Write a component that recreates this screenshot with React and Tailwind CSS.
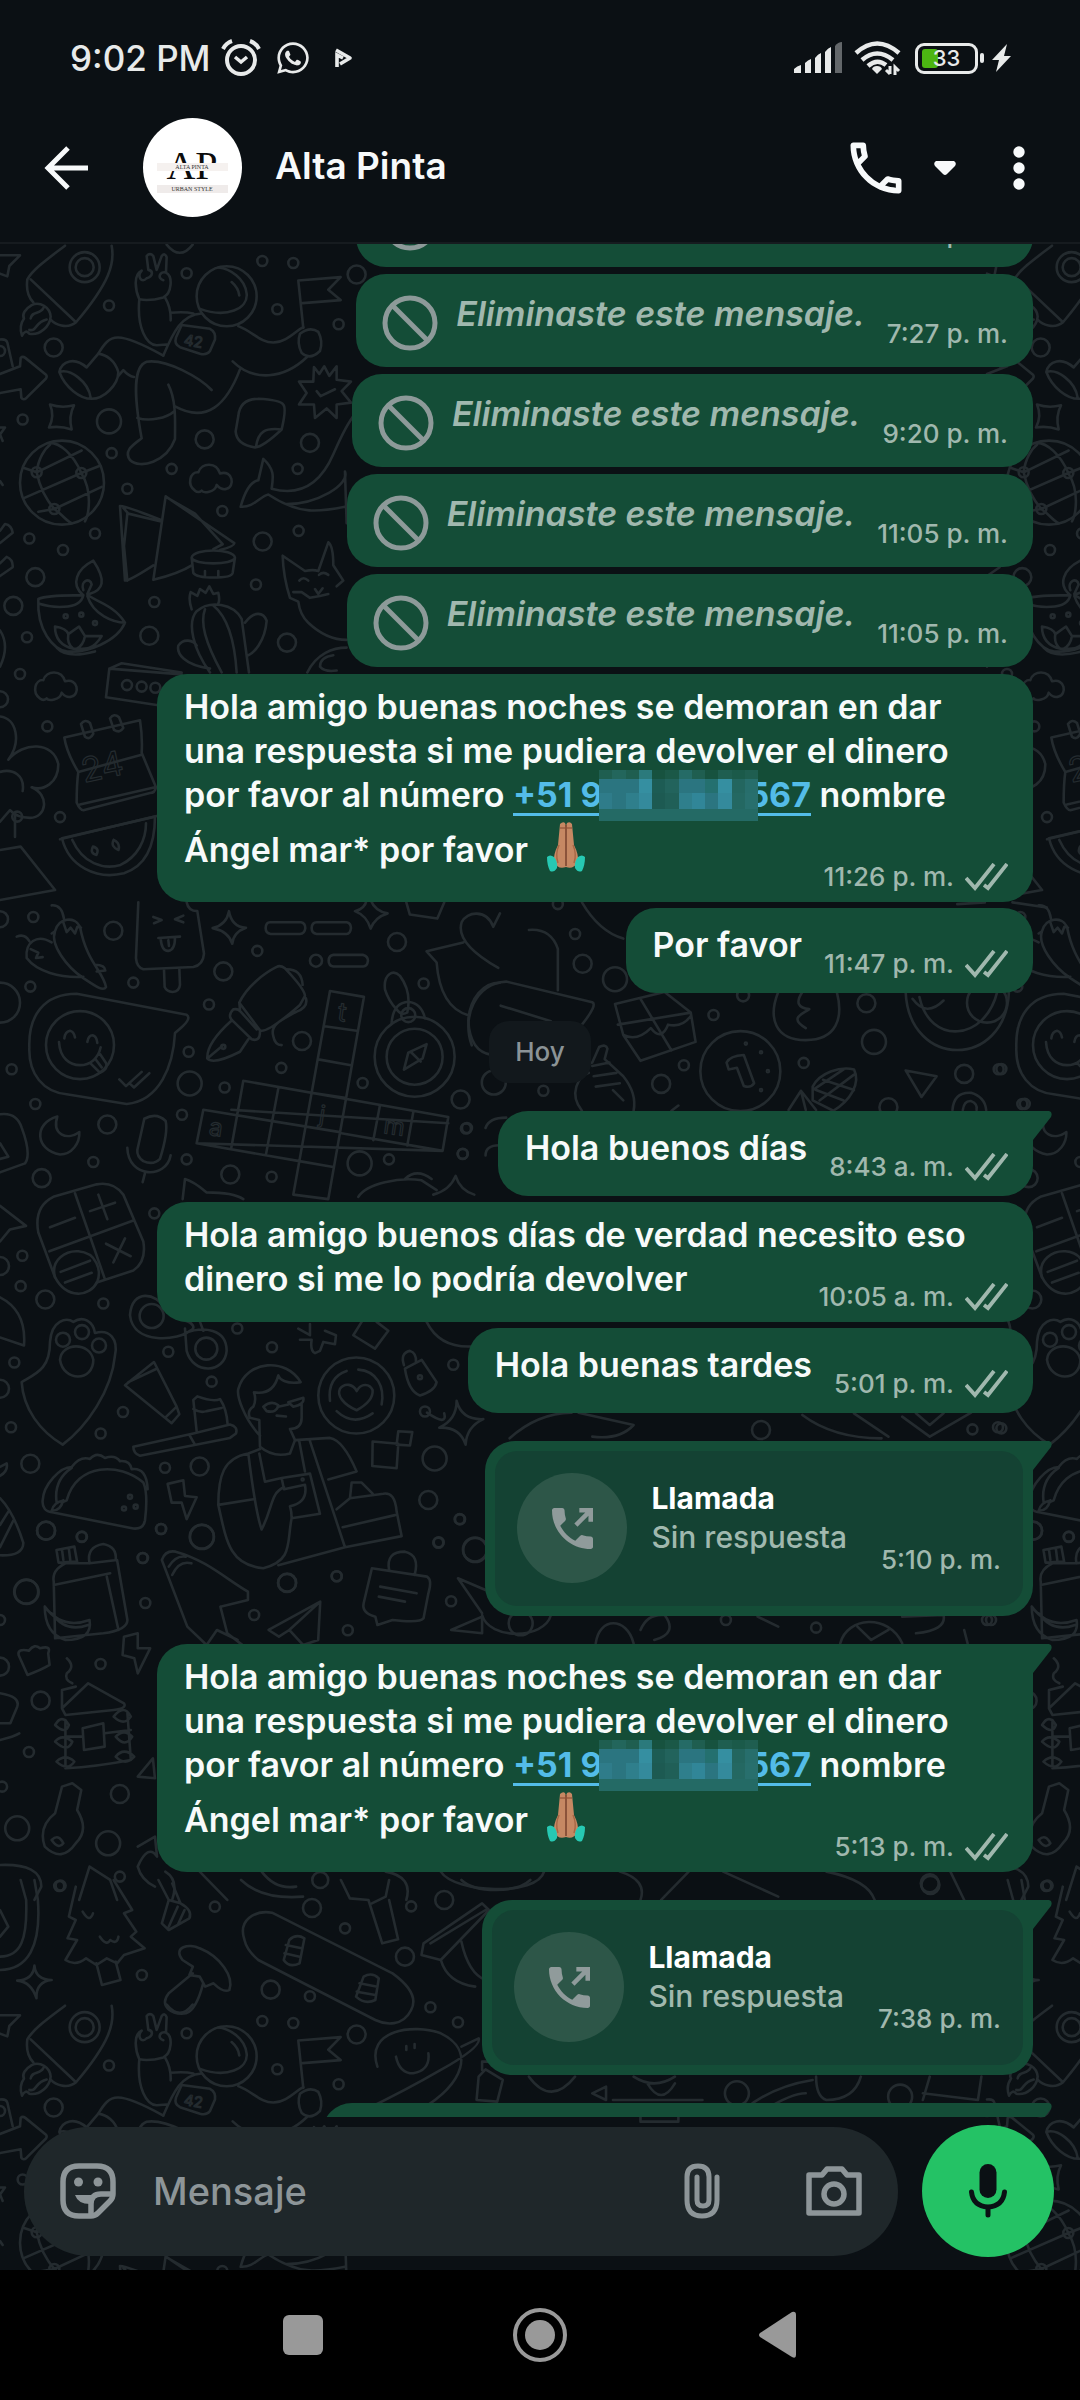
import { FaWhatsapp } from 'react-icons/fa';
import { MdOutlineCall } from 'react-icons/md';
import clsx from 'clsx';

const MESSAGES = [
  { id: 1, type: 'deleted', time: '7:27 p. m.' },
  { id: 2, type: 'deleted', time: '7:27 p. m.' },
  { id: 3, type: 'deleted', time: '9:20 p. m.' },
  { id: 4, type: 'deleted', time: '11:05 p. m.' },
  { id: 5, type: 'deleted', time: '11:05 p. m.' },
  { id: 6, type: 'request', time: '11:26 p. m.' },
  { id: 7, type: 'text', text: 'Por favor', time: '11:47 p. m.' },
  { id: 8, type: 'day', text: 'Hoy' },
  { id: 9, type: 'text', text: 'Hola buenos días', time: '8:43 a. m.', tail: true },
  {
    id: 10,
    type: 'long',
    lines: ['Hola amigo buenos días de verdad necesito eso', 'dinero si me lo podría devolver'],
    time: '10:05 a. m.',
  },
  { id: 11, type: 'text', text: 'Hola buenas tardes', time: '5:01 p. m.' },
  { id: 12, type: 'call', time: '5:10 p. m.', tail: true },
  { id: 13, type: 'request', time: '5:13 p. m.', tail: true },
  { id: 14, type: 'call', time: '7:38 p. m.', tail: true },
  { id: 15, type: 'empty', tail: true },
];

// Wallpaper line art. Each sheet has its own origin and scale; dots are [x, y, radius].
const SHEETS = [
  {
    x: 0, y: 240, sx: 0.3333, sy: 0.3827,
    paths: [
      'M195 15C150 45 100 75 82 103C78 130 85 150 100 163M335 15C345 60 330 110 228 215C200 235 165 220 152 208M92 103L228 215',
      'M95 170C75 180 65 195 72 205C60 220 60 235 66 250C72 240 80 235 88 245C120 250 150 225 152 200C150 175 120 160 95 170M92 205C95 185 120 195 130 178M88 235C110 240 105 215 140 208',
      'M0 350L60 330L62 308Q68 303 76 308L138 352Q142 357 138 362L80 412Q70 420 64 412L62 390L0 400M0 260Q18 258 22 268L38 330',
      'M0 40L60 40L28 68L22 95L0 88M0 490L15 490L0 508L8 525M0 630L8 640',
      'M260 333C225 305 185 315 178 345C195 385 240 415 275 415C310 415 355 380 355 345C345 315 320 300 295 297L260 333M178 345C210 335 265 370 272 412',
      'M295 297C330 245 350 235 490 302M355 355L370 340Q385 355 402 358M425 518C400 400 400 330 440 318C500 310 600 360 635 392M505 378C530 420 525 480 525 520C500 580 420 600 390 575C370 550 400 535 425 518M412 465C450 475 500 465 522 448',
      'M525 435C620 480 680 430 720 338M698 317C760 370 850 365 922 305M490 302C520 240 545 195 605 192M418 155C410 230 440 275 470 275L500 273M495 150C515 180 512 200 512 210M512 190C540 188 570 190 580 192M715 225C760 240 780 268 820 268C860 268 890 235 910 228',
      'M418 155C405 130 400 90 425 80C410 95 425 115 440 100C460 95 460 80 445 78L440 42Q450 32 460 42L470 78L485 42Q495 32 500 45L498 85C480 80 470 100 490 105M498 85C520 95 515 140 490 150Q450 160 418 155',
      'M545 222L630 232Q648 240 645 260L630 290Q620 302 600 297L540 280Q522 272 528 255Z',
      'M600 180C680 205 745 180 740 140C735 100 690 75 655 72M695 110Q715 125 718 145M910 230L895 106L1022 97L985 130L1022 157L908 165',
      'M900 245Q930 225 955 240Q970 265 960 290Q930 315 905 295Q890 270 900 245',
      'M942 332L958 350L973 330L988 355L1010 330L1010 365L1053 370L1025 395L1053 425L1010 430L1010 465L980 440L945 465L942 430L897 430L920 400L897 370L940 370ZM950 395L962 408L1005 390',
      'M150 430Q185 440 222 432Q205 460 215 495Q180 485 147 490Q165 460 150 430Z',
      'M110 607C115 570 135 545 150 535M110 607C120 650 140 680 163 703M244 609C220 560 180 530 150 530M244 609C280 660 265 720 255 735M163 703L305 645M110 607L245 550M70 675L244 609L300 590M163 703C190 720 200 735 215 740M163 703L115 710M70 595L110 607',
      'M775 415Q720 415 715 460L707 500Q710 535 765 542Q790 540 845 495Q860 440 850 430Q840 418 775 415M768 540C775 500 795 490 845 495',
      'M585 655C560 640 570 605 595 607C605 580 650 580 660 610C700 600 705 645 680 650C665 655 655 645 650 640C645 660 610 662 605 655Q595 662 585 655Z',
      'M120 1198C95 1183 105 1148 130 1150C140 1123 185 1123 195 1153C235 1143 240 1188 215 1193C200 1198 190 1188 185 1183C180 1203 145 1205 140 1198Q130 1205 120 1198Z',
      'M722 697C740 640 760 630 775 628L790 572C825 600 820 620 815 650C900 670 960 640 1000 560C1020 520 1040 480 1065 455M722 697C760 700 780 670 805 665C900 720 960 710 1035 697M1035 605C1050 640 950 690 860 690M1035 605L1040 740',
      'M360 695Q370 693 485 732M360 695L375 890Q380 895 460 850M382 715L372 800L382 890M370 700L385 715L480 735M497 670L703 792Q705 800 660 810M497 670L460 888Q540 870 575 850M505 675L585 715L668 795L640 808',
      'M575 830C580 805 700 805 705 830C700 850 580 850 575 830L580 870Q590 882 640 882Q695 882 698 870L705 830M615 865L615 880M655 865L655 880',
      'M115 938C110 1020 160 1070 200 1075C260 1080 350 1050 375 1000C340 950 270 940 262 925M115 938C150 925 230 930 250 928C240 970 150 960 115 950M262 930C280 980 340 1000 375 1000M250 928C210 900 230 860 280 838C320 890 310 915 268 925M250 915C240 890 270 880 275 900L262 925M165 1010Q200 1015 205 1030L237 1010L255 1035L305 1035C280 1070 260 1070 220 1068C180 1060 165 1040 165 1010M205 1030Q200 1055 220 1068M255 1035Q250 1060 230 1068M170 1065Q200 1095 285 1075',
      'M848 825L915 865Q940 860 955 865L985 790Q1000 800 1000 850L1030 890L1010 905M848 825Q850 880 870 935L895 945Q900 980 925 1000Q980 1045 1040 1045M898 890Q910 878 925 890M957 875Q970 865 985 875M945 912L955 925L968 910M880 920L905 920L930 935L960 930L985 925',
      'M575 965C565 940 570 925 572 920L592 930L600 912L617 922L628 905L640 925L655 922Q660 940 655 950M630 1130C580 1070 560 1000 590 970C630 940 700 950 725 990L747 1130M665 1130C615 1050 600 1000 615 965M710 1130C705 1060 690 990 640 955M735 1000C760 970 790 970 800 995C795 1050 760 1080 745 1085M630 1120C550 1110 530 1080 535 1060C550 1040 580 1045 590 1060',
      'M922 1130C950 1080 1000 1065 1040 1065M1000 1085Q960 1090 960 1115Q975 1130 1010 1125M318 1195L328 1120L365 1106L545 1130M328 1120L545 1135M318 1195L470 1215',
      'M193 1300L420 1255Q428 1300 425 1340L468 1430Q465 1445 450 1445L250 1490Q240 1490 230 1470Q230 1420 235 1390Q200 1340 193 1300M235 1390L425 1345M240 1475L465 1430',
      'M243 1265Q255 1250 270 1262L280 1290Q270 1308 255 1298ZM330 1250Q342 1235 357 1247L370 1275Q360 1290 342 1280Z',
      'M0 1245C50 1250 65 1310 25 1358C70 1310 160 1310 175 1370C175 1420 130 1440 95 1430C150 1450 140 1510 90 1510Q50 1510 30 1490L0 1520M0 1390C40 1380 75 1400 68 1440M45 1500L45 1560',
      'M0 760L15 742Q35 745 38 765L0 792M0 845L20 828Q40 835 38 855L0 878M0 1020Q30 1060 0 1115M500 12Q540 55 578 12M180 1566L470 1505',
    ],
    dots: [
      [254, 71, 15], [254, 71, 9], [680, 147, 30], [186, 634, 42], [110, 607, 5], [244, 609, 5], [163, 703, 5],
      [560, 87, 5], [787, 55, 5], [880, 60, 5], [832, 181, 5], [1016, 220, 5], [327, 171, 5], [161, 281, 9],
      [68, 469, 5], [327, 474, 12], [335, 557, 5], [614, 521, 9], [515, 598, 5], [930, 530, 9], [893, 598, 5],
      [382, 650, 5], [667, 708, 5], [285, 767, 5], [88, 780, 5], [189, 810, 5], [788, 788, 9], [896, 760, 5],
      [106, 881, 9], [768, 900, 5], [463, 946, 5], [40, 956, 9], [448, 1034, 9], [81, 1038, 5], [861, 1052, 9],
      [60, 1134, 5], [381, 1163, 5], [425, 1167, 5], [466, 1170, 5], [142, 1271, 5], [180, 1508, 5], [0, 1200, 8],
      [1070, 90, 9], [197, 983, 2], [244, 979, 2], [285, 1001, 2], [0, 290, 5],
    ],
    labels: [[550, 274, 15, 10, '42'], [252, 1418, 34, -12, '24']],
  },
  {
    x: 0, y: 380, sx: 0.6887, sy: 0.3333,
    paths: [
      'M90 1375L225 1310M90 1375C100 1460 140 1500 180 1480C210 1460 225 1400 225 1310M105 1380C120 1450 150 1470 175 1455C200 1430 212 1380 212 1330M135 1400Q130 1420 140 1425Q145 1405 135 1400M165 1380Q160 1400 172 1410Q175 1390 165 1380M0 1410L30 1400L80 1530L0 1560',
    ],
    dots: [[25, 1310, 5]],
  },
  {
    x: 0, y: 900, sx: 0.3333, sy: 0.4464,
    paths: [
      'M165 70C150 100 200 150 250 175C290 195 310 205 318 195C310 160 260 140 240 60C225 35 175 40 165 70L155 75M190 50L200 72L212 62L225 75L232 60L243 62M155 12Q185 10 192 42M50 82Q75 75 88 92M155 95C110 75 75 95 80 130C110 160 180 175 250 172M92 110L115 118L108 130L128 128M285 145Q315 145 316 158L290 160',
      'M415 5L408 130Q410 150 430 155L580 150Q610 145 612 120L592 25Q565 25 560 5M492 155L494 195Q500 205 518 206Q538 205 540 190L538 152M460 38L485 45L462 52M550 35L525 43L550 50M475 85L540 82M482 86Q485 115 505 114Q525 112 525 84M505 90L507 103',
      'M687 25Q695 60 738 62Q700 72 697 98Q685 70 638 63Q680 55 687 25ZM1112 0Q1125 25 1163 30Q1125 38 1112 64Q1100 35 1065 25Q1095 20 1100 0',
      'M810 50H903Q916 52 916 63Q914 76 900 76H812Q797 75 797 63Q798 50 810 50ZM950 50H1040Q1053 52 1053 63Q1051 76 1040 76H950Q935 75 935 63Q936 50 950 50ZM1000 123H1090Q1104 126 1104 136Q1102 149 1090 149H1000Q986 147 986 136Q987 124 1000 123Z',
      'M88 330C85 260 130 210 230 210L560 257Q575 265 545 285L525 298C520 370 480 450 380 457L200 435C130 430 85 390 88 330M193 310Q195 295 210 293Q222 295 225 308M262 318Q265 303 278 303Q290 305 292 320M177 318C180 355 210 370 240 370C270 370 295 355 302 330M270 365L300 387Q325 380 318 365L300 345M285 355L305 375M358 402L378 417L425 385M392 413L402 420L448 388',
      'M830 150C790 165 740 195 718 230L780 292Q800 300 900 235L915 215Q915 200 855 153Q840 145 830 150M860 155Q905 155 908 190M918 220Q925 240 890 250C840 270 810 280 820 305Q825 325 845 325M718 230L720 245M700 245Q680 260 700 272L755 312Q780 318 780 295M700 245Q715 243 722 250L770 290M695 270C650 300 620 330 622 355Q640 370 720 340L745 312M622 355L665 328',
      'M990 204L1092 217L985 670L880 660ZM974 283L1070 293M955 357L1053 370M935 432L1035 443M730 405L1345 486L1328 562L590 545L610 470L1020 520M730 405L694 555M835 422L798 570M1140 460L1120 538M1240 475L1222 550M898 585L1000 598M590 545L898 585M1328 562L1020 522M694 470L1345 500',
      'M1155 200C1150 165 1180 155 1200 170C1225 195 1230 225 1222 252Q1205 260 1190 245Q1165 225 1155 200M1175 275Q1180 230 1225 228Q1265 232 1275 265M1212 380L1225 342L1280 323L1268 355ZM1232 340L1262 362M1280 115L1390 95M1280 115L1310 140Q1320 240 1405 258M1495 152C1420 120 1370 85 1385 50C1400 25 1460 20 1480 60L1500 30M1405 270C1410 220 1450 185 1500 185M1405 270Q1410 340 1475 347',
      'M172 485C100 500 105 560 180 570C215 570 240 545 238 520C200 540 155 525 172 485M433 490Q470 475 497 495Q505 520 480 580Q460 595 430 585Q410 575 412 560ZM382 555C385 625 500 625 512 572M435 612L428 632',
      'M115 745C105 705 120 680 160 665L290 637Q340 630 370 660L430 765Q440 810 400 830L290 857M115 745L165 845M225 657L315 850M148 787L400 718M150 733L225 712M270 697L345 678M295 660L322 715M318 770L392 798M375 758L340 812M182 833L270 808M195 857L275 835',
      'M165 845C150 805 200 785 235 787C290 790 305 830 292 855C270 890 200 895 165 845M0 480Q50 475 65 510Q95 570 75 590L0 610M0 545L25 575L0 580M0 685L78 730L30 738L0 765M0 890Q80 920 72 998L0 980',
      'M65 1080C110 1060 150 1050 150 990C155 940 200 935 220 945C250 930 280 945 285 970C330 960 355 985 345 1020C335 1100 260 1180 188 1220C120 1190 70 1140 65 1080',
      'M180 1030C185 990 270 990 280 1030C280 1080 190 1080 180 1030M375 1087L462 1035L530 1135L495 1160ZM385 1080L470 1050M495 1160L515 1172L538 1152L530 1135M400 1225L580 1195L690 1175Q715 1180 708 1195L690 1205L420 1245Q400 1240 400 1225M568 1198L585 1220M590 1190L580 1120L592 1112Q640 1125 660 1118Q680 1140 683 1175M580 1140Q600 1150 620 1145L665 1138',
      'M390 930C395 870 470 880 495 915L545 940C580 945 590 960 570 965C540 985 400 1000 390 930M555 960L560 1010C580 1065 675 1060 680 1010C680 960 610 955 555 970M600 945L610 965M895 960L930 975L930 950M900 985L935 985Q930 1010 945 1015L960 1010L970 990L1005 995L1008 975L975 965M1060 975L1085 945M1060 975L1125 1005L1165 965L1130 945M1280 945Q1320 1005 1420 1000',
      'M780 1200C730 1160 710 1110 715 1095C740 1030 860 1025 902 1080C860 1085 840 1075 835 1065Q820 1110 762 1103Q770 1120 760 1135Q740 1145 750 1160L778 1165L780 1225Q820 1250 870 1240L885 1210L870 1185Q905 1185 905 1160L905 1130M790 1135Q815 1120 835 1132Q830 1150 800 1145ZM865 1125L910 1115Q915 1130 880 1135ZM835 1135L865 1130M830 1155L858 1157',
      'M655 1355C655 1290 670 1250 745 1240L780 1230M655 1355C680 1440 690 1490 790 1497C880 1480 860 1440 875 1385L960 1375L930 1285L845 1295L852 1320L915 1310Q925 1350 870 1358Q875 1370 875 1385M745 1240C755 1300 770 1380 785 1410C820 1360 810 1330 852 1315M655 1355L765 1342M795 1303L845 1295M795 1303L778 1240M885 1210L990 1205Q1030 1210 1070 1280L985 1298M930 1212L1035 1450L835 1490M898 1213L915 1280M1010 1365L1050 1340L1150 1330Q1185 1325 1190 1370L1205 1425L1035 1450M1028 1405L1185 1378M1050 1340L1055 1305L1085 1305L1118 1330',
      'M1070 1143C1030 1130 1010 1110 1020 1095C1035 1080 1060 1085 1070 1100C1085 1080 1110 1085 1118 1098C1120 1120 1090 1135 1070 1143M990 1122C985 1090 1000 1065 1040 1055M1075 1052C1130 1055 1155 1090 1145 1130M1010 1145Q1060 1180 1118 1150M1215 1050L1265 1030L1310 1080Q1305 1100 1260 1110Q1225 1100 1215 1050M1212 1042Q1200 1015 1230 1010Q1250 1015 1248 1035',
      'M1118 1213L1195 1218L1190 1273L1117 1268ZM1195 1190L1237 1192L1230 1222L1190 1220ZM1370 1122Q1385 1165 1450 1163Q1400 1180 1397 1220Q1380 1180 1318 1182Q1370 1165 1370 1122ZM503 1308L550 1300L555 1335L590 1338L560 1387L545 1350L515 1350Z',
      'M128 1345C130 1310 180 1270 215 1270Q240 1245 270 1252Q290 1235 315 1250Q345 1242 360 1257Q390 1255 395 1275Q440 1270 443 1320M128 1345Q125 1370 160 1372L400 1408Q430 1410 435 1390Q445 1330 430 1305C360 1260 230 1260 200 1345L185 1350M190 1345Q180 1370 155 1368Q160 1350 190 1345M215 1272Q160 1300 170 1350',
      'M0 1340Q40 1370 70 1440Q70 1470 0 1468M0 1400L25 1370M0 1450L40 1390M0 1270L20 1262Q25 1280 0 1290M548 670L555 625Q580 630 620 655Q700 655 730 670M1075 665C1100 635 1200 620 1265 628L1310 650M1215 625Q1250 600 1295 625M1300 660Q1350 650 1367 618Q1380 650 1423 660',
    ],
    dots: [
      [100, 38, 5], [340, 69, 9], [772, 114, 5], [1191, 94, 9], [948, 136, 6], [670, 160, 9], [400, 185, 5],
      [91, 194, 5], [1271, 187, 5], [627, 234, 5], [240, 325, 34], [906, 316, 9], [566, 340, 5], [844, 376, 5],
      [35, 379, 5], [569, 411, 12], [674, 420, 5], [1088, 410, 5], [106, 457, 5], [1382, 447, 9], [1398, 512, 5],
      [322, 503, 9], [546, 481, 5], [280, 587, 5], [560, 581, 5], [125, 623, 9], [691, 615, 9], [815, 620, 5],
      [1079, 590, 12], [1167, 581, 5], [1388, 569, 5], [67, 797, 5], [463, 702, 5], [62, 865, 5], [136, 895, 9],
      [310, 904, 5], [43, 1036, 5], [505, 1012, 5], [455, 932, 12], [619, 1005, 11], [712, 960, 5], [816, 1002, 5],
      [1360, 1041, 5], [635, 1079, 5], [1069, 1110, 38], [1260, 1069, 2], [369, 1147, 5], [1275, 1146, 5],
      [33, 1181, 5], [302, 1195, 5], [91, 1263, 9], [495, 1272, 5], [599, 1269, 9], [1304, 1251, 12], [1285, 1344, 9],
      [1379, 1387, 5], [483, 1409, 5], [138, 1413, 9], [606, 1427, 12], [245, 1427, 5], [1315, 1440, 5],
      [1425, 1455, 12], [189, 985, 7], [246, 968, 7], [297, 998, 7], [1244, 351, 40], [1244, 351, 28],
      [1225, 258, 7], [670, 329, 2], [390, 1337, 2], [372, 1363, 2], [407, 1359, 2], [0, 820, 9], [0, 1095, 9],
      [0, 230, 20], [0, 43, 8], [861, 1530, 9], [1010, 1515, 5], [429, 1474, 5], [80, 1550, 12], [908, 1298, 1],
    ],
    labels: [[1010, 270, 26, 8, 't'], [955, 498, 24, 8, 'j'], [625, 526, 24, 8, 'a'], [1148, 522, 24, 8, 'm']],
  },
  {
    x: 0, y: 880, sx: 0.6887, sy: 0.3444,
    paths: [
      'M590 65L595 100L635 112L645 65M768 145Q800 140 810 200L810 320M685 480C670 400 690 300 735 295L860 355Q868 362 845 420M727 365L800 410M845 65Q870 150 905 170',
      'M893 360L965 325L1003 385L1010 470L930 525L905 450ZM897 420L1003 385M930 345L975 495M905 450Q925 470 945 430Q960 470 970 420Q990 430 1003 395',
      'M1130 325C1115 400 1125 465 1170 465C1215 465 1225 400 1215 325M1170 430C1145 400 1165 390 1175 375Q1150 370 1165 325M1315 325C1320 550 1460 550 1465 325M1335 340C1350 480 1430 470 1448 325M1325 345Q1345 400 1370 350',
      'M1055 530Q1060 510 1080 508L1095 590Q1090 605 1080 598L1070 545L1058 550ZM845 670C825 620 840 570 855 560Q845 540 860 530L870 485Q880 475 882 490L878 520L905 570Q925 620 920 670M860 540L885 530M862 570L895 560M865 600L900 590M905 640L890 610',
      'M1145 668L1163 612L1185 668M1163 612L1170 668M1180 600C1190 560 1220 540 1240 550C1250 590 1235 640 1210 670L1180 640ZM1185 610L1225 640M1195 580L1240 610M1240 565L1190 640M1225 550L1180 610M1315 553L1360 570L1338 630ZM1383 668Q1385 615 1410 618Q1430 630 1432 668M1398 668Q1400 640 1410 642Q1420 650 1418 668',
      'M705 720Q710 690 735 690M705 800Q705 770 725 770M975 670L985 655M1390 70L1430 65M1470 65L1520 80',
    ],
    dots: [
      [835, 157, 5], [846, 243, 9], [893, 288, 12], [1036, 392, 5], [1258, 358, 9], [1079, 335, 6], [993, 538, 5],
      [960, 592, 9], [1075, 555, 40], [1167, 531, 5], [1269, 470, 12], [1400, 563, 9], [1454, 549, 5], [789, 612, 5],
      [717, 588, 12], [1488, 650, 5], [672, 795, 5], [678, 720, 5], [810, 70, 5], [1083, 475, 1], [1105, 500, 1],
      [1115, 555, 1], [1105, 610, 1], [1290, 660, 9],
    ],
  },
  {
    x: 0, y: 1400, sx: 0.6887, sy: 0.3333,
    paths: [
      'M78 545Q75 510 95 490L130 490L170 480L185 660Q185 690 150 700L80 715ZM82 450L108 440L112 485L85 488ZM90 448L92 480M100 446L102 480M130 490Q125 440 150 432Q170 440 168 480M78 555L160 520M155 530L172 690M65 620Q90 690 130 660Q135 720 95 720Q65 700 65 620M75 640Q95 700 128 675',
      'M235 480Q240 450 255 455C300 480 330 540 360 575L360 600L320 620M235 480L272 680L300 735M245 500Q255 465 270 470M250 525Q260 480 278 490M320 620L330 700L355 740M300 735L315 690L345 720',
      'M540 505L620 530Q628 540 622 580L615 655Q610 670 570 660L548 675L545 650Q525 640 528 610ZM565 510Q560 455 588 455Q610 465 602 525M552 560L605 580M550 590L588 605M465 605L390 690L405 710L420 690L440 735L462 720ZM420 690L465 605M665 535L705 570M655 690L700 650L700 700ZM665 535L700 640',
      'M27 765Q25 745 42 752Q50 730 58 745Q75 735 70 760L72 795Q60 810 40 825ZM180 710L200 700L200 745L218 745L200 820L195 775L178 765ZM97 775Q110 800 97 820Q93 840 105 850',
      'M90 925L128 850L180 910Q185 925 165 930L95 945ZM90 870L90 925M90 870L110 860M95 960L95 1105Q140 1100 190 1080L185 940M120 985L150 970L152 1040L122 1050ZM95 1010L120 1010M152 1000L190 990M80 975Q90 940 100 975Q95 1005 80 975M80 1025Q90 1000 105 1025Q98 1060 80 1025M82 1085Q95 1060 108 1085Q98 1115 82 1085M165 950Q180 910 190 950Q180 980 165 950M168 1010Q180 985 192 1010Q182 1045 168 1010M168 1070Q180 1040 195 1070Q182 1100 168 1070',
      'M90 1160L105 1150L118 1170L112 1230Q130 1290 110 1330Q90 1390 65 1340Q55 1280 80 1240ZM75 1320Q85 1300 92 1330Q85 1350 75 1320M0 880Q30 890 25 920L15 970L0 970M0 1020Q20 1010 28 1000M200 1130L222 1075L225 1135Z',
      'M0 1395Q60 1390 60 1460L50 1500M200 1340L225 1310L228 1370Q215 1330 200 1400Q205 1440 225 1460M130 1400L115 1500M130 1400L160 1440L170 1500M240 1415Q260 1440 250 1500M290 1415L330 1500M380 1415Q400 1470 430 1460M560 1415Q600 1430 590 1500M640 1415C660 1480 780 1490 790 1415M900 1415Q940 1440 930 1500M1000 1415L960 1500M1050 1415L1130 1490M1200 1415Q1260 1440 1270 1500M1380 1415L1400 1500',
      'M700 645C710 720 790 720 800 645M865 730C870 650 910 650 920 730M930 690Q940 640 965 645Q985 700 950 720M1100 650L1130 680M1220 730C1230 650 1290 640 1310 730M1245 680L1265 720L1290 690M1310 650L1370 645Q1375 690 1330 700M1405 730L1400 690',
      'M740 115Q780 40 830 38M840 38L920 75Q900 120 860 110M1165 45Q1210 115 1280 115M1240 40L1290 110M1310 50L1350 110L1410 38M1330 40L1350 75L1370 40M620 38Q650 80 645 40',
    ],
    dots: [
      [67, 392, 9], [119, 410, 5], [234, 387, 5], [293, 410, 12], [207, 474, 5], [38, 575, 12], [211, 609, 5],
      [417, 548, 9], [489, 529, 5], [369, 645, 5], [505, 691, 5], [655, 604, 5], [637, 427, 5], [690, 450, 12],
      [668, 358, 5], [146, 792, 5], [59, 902, 9], [42, 1056, 5], [174, 1182, 9], [25, 1285, 12], [157, 1330, 12],
      [3, 1160, 5], [88, 1457, 5], [174, 1430, 5], [1185, 683, 5], [1054, 660, 5], [1439, 660, 5], [1105, 90, 9],
      [1412, 88, 5], [1454, 85, 5], [756, 670, 12], [1350, 1450, 9], [465, 1440, 8], [0, 660, 5], [0, 800, 9],
    ],
  },
  {
    x: 0, y: 1880, sx: 0.6887, sy: 0.3333,
    paths: [
      'M110 20L100 110L110 120L98 175L112 180L95 240Q110 260 125 235L140 255L155 235L170 250L180 225L210 205L190 170L198 155L180 100L192 90L165 0M140 250L148 315L175 300L168 245M120 95Q130 130 135 100M145 170Q155 200 160 180Q170 195 172 170',
      'M230 0L245 60L235 130L245 150L275 115Q280 90 262 70L250 10M245 60L262 70M258 80L245 140M268 90L258 135M265 240C250 200 275 190 290 205C320 230 340 290 333 330Q325 340 310 310L298 320L290 290L275 285L280 260ZM280 280L245 340C230 380 250 405 270 400Q285 390 295 310',
      'M355 180C345 120 370 90 395 98L570 280Q610 340 597 390C585 440 560 435 545 420L375 240Q358 210 355 180M420 180Q430 160 442 175L435 250Q420 265 412 240ZM415 195L438 205M413 220L435 230M528 290Q540 275 550 295L545 360Q530 375 517 350ZM522 310L548 320M518 335L545 345',
      'M50 257Q52 300 75 300Q52 305 53 355Q45 305 25 302Q48 300 50 257ZM495 0L508 55L535 60L555 190L578 178L565 60M565 0L560 50L540 70M615 190L700 70L710 90L640 240L612 225ZM625 190L705 90M640 240Q650 310 690 320M670 185Q680 280 705 300',
      'M350 0Q380 60 440 50M670 0C690 40 750 40 770 0M0 270C40 270 60 200 55 60L50 0M0 230C30 230 40 180 38 60L30 0M0 90L12 140L0 170',
      'M548 560C530 450 600 430 640 460C690 510 675 610 610 690M670 500L695 475Q700 500 640 570Q590 630 530 690M575 530Q580 580 600 580Q625 570 622 520M590 498L590 510M602 492L602 504M695 590L705 568L730 600L722 665L692 660ZM700 570L700 545L708 545M768 590Q800 680 835 590M860 640L880 620L880 660ZM920 590Q950 630 980 590M890 660L1020 660M930 690L930 725L985 725L985 690M940 610Q960 680 980 610M1080 690Q1120 620 1180 600M1110 690Q1150 640 1170 640M1185 590Q1185 650 1200 660Q1240 660 1250 590M1340 660L1350 590M1340 640L1420 660L1425 590',
    ],
    dots: [
      [86, 18, 5], [312, 80, 5], [453, 84, 9], [501, 145, 5], [597, 79, 5], [645, 60, 9], [206, 285, 5],
      [393, 329, 9], [450, 349, 5], [588, 230, 9], [625, 382, 5], [665, 427, 5], [1351, 15, 9], [1070, 640, 12],
      [1307, 650, 12],
    ],
  },
];

const Doodles = () => (
  <svg className="pointer-events-none absolute inset-0 h-full w-full" aria-hidden="true">
    <defs>
      <g id="doodles" fill="none" stroke="#242b2f" strokeWidth="2.6" strokeLinecap="round" strokeLinejoin="round">
        {SHEETS.map((sheet, i) => (
          <g key={i}>
            <g transform={`translate(${sheet.x} ${sheet.y}) scale(${sheet.sx} ${sheet.sy})`}>
              {sheet.paths.map((d) => <path key={d} d={d} vectorEffect="non-scaling-stroke" />)}
            </g>
            {sheet.dots.map(([x, y, r]) => (
              <circle key={`${x}-${y}-${r}`} cx={sheet.x + x * sheet.sx} cy={sheet.y + y * sheet.sy} r={r} />
            ))}
            {(sheet.labels || []).map(([x, y, size, angle, text]) => (
              <text
                key={text}
                transform={`translate(${sheet.x + x * sheet.sx} ${sheet.y + y * sheet.sy}) rotate(${angle})`}
                fontSize={size}
                strokeWidth="1.2"
              >
                {text}
              </text>
            ))}
          </g>
        ))}
      </g>
    </defs>
    <g transform="translate(0 -244)">
      <use href="#doodles" />
      <use href="#doodles" x="987" />
      <use href="#doodles" y="1760" />
      <use href="#doodles" x="987" y="1760" />
    </g>
  </svg>
);

const StatusBar = () => (
  <div className="flex h-[116px] items-center justify-between pr-[69px] pl-[70px] text-[#e8eaea]">
    <div className="flex items-center">
      <span className="text-[35px] font-medium">9:02 PM</span>
      <svg className="ml-2.5 h-[38px] w-10" viewBox="0 0 40 38" fill="none" stroke="currentColor">
        <circle cx="20" cy="21" r="14" strokeWidth="4" />
        <path d="M2 10Q5 4 11 2M38 10Q35 4 29 2" strokeWidth="4" />
        <path d="M14 18L20 23L26 18" strokeWidth="3.5" />
      </svg>
      <FaWhatsapp className="ml-3.5 size-9" />
      <svg className="ml-6 h-5 w-[18px]" viewBox="0 0 18 20" fill="none" stroke="currentColor" strokeWidth="3.6">
        <path d="M2 19V7L8 10" />
        <path d="M1 2L15 10L5 16" strokeLinejoin="round" />
      </svg>
    </div>
    <div className="flex items-center">
      <svg className="h-8 w-12" viewBox="0 0 48 32" fill="currentColor">
        <path d="M0 31V27Q3 24 7 23V31ZM11 31V21Q14 18 17 17V31ZM21 31V16Q24 12 27 11V31ZM31 31V10Q34 6 37 5V31Z" />
        <path d="M41 31V4Q44 0 48 0V31Z" opacity="0.4" />
      </svg>
      <svg className="ml-3 h-9 w-[47px]" viewBox="0 0 47 36" fill="none" stroke="currentColor" strokeWidth="4.5">
        <path d="M2 13Q23 -6 45 13M8 20Q23 7 39 20M14 26Q23 18 32 25" />
        <path d="M23 26Q27 26 28 29L23 34L18 29Q19 26 23 26Z" fill="currentColor" stroke="none" />
        <path d="M36 26V34M32 30L36 34M41 35V27L45 31" strokeWidth="3" />
      </svg>
      <div className="relative ml-3.5 flex h-[31px] w-[63px] items-center justify-center rounded-[9px] border-[3px] border-current">
        <span className="absolute top-[3px] bottom-[3px] left-[4px] w-4 rounded-[3px] bg-[#4cb512]" />
        <span className="relative text-[22px] leading-6 font-medium">33</span>
      </div>
      <span className="ml-0.5 h-2.5 w-1 rounded-full bg-current" />
      <svg className="ml-2 h-7 w-[19px]" viewBox="0 0 19 28" fill="currentColor">
        <path d="M15 0L0 16H7L4 28L19 12H12Z" />
      </svg>
    </div>
  </div>
);

const Avatar = () => (
  <svg className="size-[99px] shrink-0 font-['Liberation_Serif',serif]" viewBox="0 0 99 99" textAnchor="middle" role="img" aria-label="Alta Pinta Urban Style">
    <circle cx="49.5" cy="49.5" r="49.5" fill="#fff" />
    <text x="49" y="61" fontSize="40" fill="#0c0c0c">AP</text>
    <rect x="14" y="45" width="71" height="8" fill="#f5f1ef" />
    <text x="49" y="51" fontSize="6" fill="#333">ALTA PINTA</text>
    <rect x="14" y="67" width="71" height="8" fill="#efebea" />
    <text x="49" y="73" fontSize="6" fill="#333">URBAN STYLE</text>
  </svg>
);

const Header = () => (
  <header className="flex h-[128px] items-center border-b-2 border-[#161b1f] pr-[55px] pb-[23px] pl-11 text-[#f7f9fa]">
    <button type="button" aria-label="Atrás">
      <svg className="h-11 w-11" viewBox="0 0 44 44" fill="none" stroke="currentColor" strokeWidth="5">
        <path d="M44 22H3M24 2L4 22L24 42" />
      </svg>
    </button>
    <div className="ml-[55px]"><Avatar /></div>
    <h1 className="ml-[33px] flex-1 pb-1 text-[37px] font-semibold">Alta Pinta</h1>
    <button type="button" aria-label="Llamar" className="flex items-center">
      <MdOutlineCall className="size-[68px]" />
      <svg className="ml-6 h-3.5 w-[22px]" viewBox="0 0 22 14" fill="currentColor">
        <path d="M2 0H20Q23 2 21 5L13 13Q11 15 9 13L1 5Q-1 2 2 0Z" />
      </svg>
    </button>
    <button type="button" aria-label="Más opciones" className="ml-[57px]">
      <svg className="h-11 w-3" viewBox="0 0 12 44" fill="currentColor">
        <circle cx="6" cy="6" r="5.7" />
        <circle cx="6" cy="22" r="5.7" />
        <circle cx="6" cy="38" r="5.7" />
      </svg>
    </button>
  </header>
);

const Bubble = ({ tail, className, children }) => (
  <div className={clsx('relative self-end rounded-[30px] bg-[#144d37]', tail && 'rounded-tr-none', className)}>
    {children}
    {tail && (
      <svg className="absolute top-0 left-full -ml-px h-[29px] w-5" viewBox="0 0 20 29" fill="#144d37" aria-hidden="true">
        <path d="M0 0H17Q21 1 19 6L1 29H0Z" />
      </svg>
    )}
  </div>
);

const Stamp = ({ time, read, className }) => (
  <span className={clsx('flex items-center gap-[11px] text-[26px] leading-8 font-medium whitespace-nowrap text-[#a0b8ae]', className)}>
    {time}
    {read && (
      <svg className="h-7 w-[43px]" viewBox="0 0 43 28" fill="none" stroke="currentColor" strokeWidth="3.8" role="img" aria-label="Entregado">
        <path d="M1 15L10 25L29 1M19 22L23 25L42 1" />
      </svg>
    )}
  </span>
);

const DeletedMessage = ({ time }) => (
  <Bubble className="mt-[7px] flex h-[93px] pr-[25px] pl-[26px]">
    <svg className="mt-[21px] size-14" viewBox="0 0 56 56" fill="none" stroke="#8d9a99" strokeWidth="5" aria-hidden="true">
      <circle cx="28" cy="28" r="25" />
      <path d="M10.500 10.500L45.500 45.500" />
    </svg>
    <p className="mt-[18px] ml-[18px] text-[34px] leading-[44px] font-semibold whitespace-nowrap text-[#a0b8ae] italic">Eliminaste este mensaje.</p>
    <Stamp time={time} className="mb-[17px] ml-[22px] self-end" />
  </Bubble>
);

const TextMessage = ({ text, time, tail }) => (
  <Bubble tail={tail} className={clsx('flex pr-[25px] pl-[27px]', tail ? 'mt-7' : 'mt-1.5')}>
    <p className="pt-[15px] pb-[26px] text-[34px] leading-[44px] font-semibold text-[#f7fafa]">{text}</p>
    <Stamp time={time} read className="mb-[13px] ml-[22px] self-end" />
  </Bubble>
);

const LongMessage = ({ time, tail, first, children }) => (
  <Bubble tail={tail} className={clsx('grid w-[876px] max-w-full pr-[25px] pl-[27px]', tail ? 'mt-7' : first ? 'mt-[7px]' : 'mt-1.5')}>
    <p className="pt-[11px] pb-[21px] text-[34px] leading-[44px] font-semibold text-[#f7fafa] [grid-area:1/1]">{children}</p>
    <Stamp time={time} read className="mb-[9px] self-end justify-self-end [grid-area:1/1]" />
  </Bubble>
);

const MOSAIC = [
  ['#1f5e50', '#23665c', '#1f5e50', '#2b7a7c', '#17523f', '#1b5847', '#256b66', '#1f5e50', '#17523f', '#1f5e50', '#1b5a4a', '#1f5e50'],
  ['#2b7580', '#2b7580', '#2b7580', '#358fa1', '#1d5c54', '#22635c', '#2b7580', '#2b7580', '#24706f', '#358fa1', '#23665f', '#276e6c'],
  ['#2f7c8a', '#2b7580', '#2f7f8c', '#348a9c', '#1d5a52', '#205f57', '#2f7f8c', '#318698', '#2b7580', '#348a9c', '#246862', '#286f6d'],
  ['#246a65', '#246a65', '#246a65', '#246a65', '#246a65', '#246a65', '#246a65', '#246a65', '#246a65', '#246a65', '#246a65', '#246a65'],
];

const PhoneLink = () => (
  <a href="#numero" className="relative inline-flex h-[39px] w-[298px] items-end justify-between border-b-[3px] border-current align-baseline font-bold text-[#53bce8]">
    <span className="leading-9 whitespace-pre">+51 9</span>
    <span className="leading-9">567</span>
    <svg className="absolute -top-[7px] left-[86px] h-[51px] w-[159px]" viewBox="0 0 12 51" preserveAspectRatio="none" shapeRendering="crispEdges" aria-hidden="true">
      {MOSAIC.map((row, y) => row.map((fill, x) => (
        <rect key={`${x}-${y}`} x={x} y={[0, 9, 23, 39][y]} width="1" height={[9, 14, 16, 12][y]} fill={fill} />
      )))}
    </svg>
  </a>
);

const FoldedHands = () => (
  <svg className="ml-2.5 inline-block h-16 w-[38px] align-[-19px]" viewBox="0 0 38 64" role="img" aria-label="Manos juntas">
    <path d="M13 7Q16 4 18 6L19 9L20 6Q23 4 25 7L27 28Q32 38 31 45Q26 53 19 50Q11 53 7 45Q6 38 11 28Z" fill="#c68863" />
    <path d="M19 8V49" stroke="#7d4630" strokeWidth="1.6" />
    <path d="M13 11H25" stroke="#8f5338" strokeWidth="1.2" />
    <path d="M12 28Q8 37 11 46M26 28Q30 37 27 46" fill="none" stroke="#a76745" strokeWidth="1.4" />
    <path d="M0 40Q3 37 7 40Q11 45 10 51Q7 56 3 54Q0 48 0 40ZM38 40Q35 37 31 40Q27 45 28 51Q31 56 35 54Q38 48 38 40Z" fill="#27c9b3" />
  </svg>
);

const RequestMessage = ({ time, tail }) => (
  <LongMessage time={time} tail={tail} first={!tail}>
    Hola amigo buenas noches se demoran en dar
    <br />
    una respuesta si me pudiera devolver el dinero
    <br />
    por favor al número <PhoneLink /> nombre
    <br />
    Ángel mar* por favor <FoldedHands />
  </LongMessage>
);

const CallMessage = ({ time }) => (
  <Bubble tail className="mt-7 p-2.5">
    <div className="flex h-[155px] items-start rounded-[22px] bg-[#144233] p-[22px]">
      <span className="flex size-[110px] items-center justify-center rounded-full bg-[#2d5648] text-[#909b9b]">
        <svg className="size-[41px]" viewBox="3 3 18 18" fill="currentColor" aria-hidden="true">
          <path d="M20 15.500c-1.250 0-2.450-.2-3.570-.57-.35-.11-.74-.03-1.020.24l-2.200 2.200c-2.830-1.440-5.150-3.750-6.590-6.590l2.200-2.210c.28-.26.36-.65.25-1C8.700 6.450 8.500 5.250 8.500 4c0-.55-.45-1-1-1H4c-.55 0-1 .45-1 1 0 9.390 7.610 17 17 17 .55 0 1-.45 1-1v-3.500c0-.55-.45-1-1-1z" />
          <path d="M15 3h6v6h-2V6.400L14.200 11.200L12.800 9.800L17.600 5H15z" />
        </svg>
      </span>
      <div className="mt-1.5 ml-6 leading-[39px]">
        <p className="text-[30px] font-bold text-white">Llamada</p>
        <p className="text-[30px] font-medium text-[#a0b8ae]">Sin respuesta</p>
      </div>
      <Stamp time={time} className="mb-2 ml-[34px] self-end" />
    </div>
  </Bubble>
);

const Message = ({ message }) => {
  if (message.type === 'deleted') return <DeletedMessage {...message} />;
  if (message.type === 'request') return <RequestMessage {...message} />;
  if (message.type === 'call') return <CallMessage {...message} />;
  if (message.type === 'empty') return <Bubble tail className="mt-7 h-[85px] w-[711px]" />;
  if (message.type === 'day') {
    return <div className="relative mt-7 ml-[47px] self-center rounded-[20px] bg-[#12181c] px-[26px] text-[26px] leading-[62px] font-medium text-[#8b9396]">{message.text}</div>;
  }
  if (message.type === 'long') {
    return (
      <LongMessage {...message}>
        {message.lines[0]}
        <br />
        {message.lines[1]}
      </LongMessage>
    );
  }
  return <TextMessage {...message} />;
};

const Composer = () => (
  <form className="relative flex items-center gap-6 pt-2 pr-[26px] pb-[13px] pl-6" onSubmit={(e) => e.preventDefault()}>
    <div className="flex h-[129px] min-w-0 flex-1 items-center rounded-full bg-[#1f272a] pr-9 pl-9 text-[#8d9598]">
      <button type="button" aria-label="Stickers" className="shrink-0">
        <svg className="size-14" viewBox="0 0 56 56" fill="none" stroke="currentColor" strokeWidth="5.500" strokeLinejoin="round">
          <path d="M19 3H37Q53 3 53 19V31Q53 35 50 38L38 50Q35 53 31 53H19Q3 53 3 37V19Q3 3 19 3Z" />
          <path d="M31 52V41Q31 31 41 31H53" />
          <circle cx="18.500" cy="19" r="4.500" fill="currentColor" stroke="none" />
          <circle cx="38" cy="19" r="4.500" fill="currentColor" stroke="none" />
          <path d="M15 32H37Q32 36 30 41Q18 41 15 32Z" fill="currentColor" stroke="none" />
        </svg>
      </button>
      <input
        type="text"
        aria-label="Mensaje"
        placeholder="Mensaje"
        className="ml-[37px] min-w-0 flex-1 bg-transparent text-[38px] font-medium outline-none placeholder:text-[#8d9598] placeholder:opacity-100"
      />
      <button type="button" aria-label="Adjuntar" className="shrink-0">
        <svg className="h-14 w-9" viewBox="0 0 36 56" fill="none" stroke="currentColor" strokeWidth="5" strokeLinecap="round">
          <path d="M33 14V37Q33 53 18 53Q3 53 3 37V14Q3 3 14 3Q25 3 25 14V37Q25 43 19 43Q13 43 13 37V14" />
        </svg>
      </button>
      <button type="button" aria-label="Cámara" className="ml-[86px] shrink-0">
        <svg className="h-[50px] w-14" viewBox="0 0 56 50" fill="none" stroke="currentColor" strokeWidth="5.500" strokeLinejoin="round">
          <path d="M3 9H16L21 3H36L41 9H53V47H3Z" />
          <circle cx="28" cy="28" r="10" />
        </svg>
      </button>
    </div>
    <button type="button" aria-label="Grabar audio" className="flex size-[132px] shrink-0 items-center justify-center rounded-full bg-[#24c265] text-[#0b1014]">
      <svg className="h-[54px] w-10" viewBox="0 0 40 54" fill="none" stroke="currentColor" strokeWidth="5" strokeLinecap="round" aria-hidden="true">
        <rect x="11.500" y="0" width="17" height="34" rx="8.500" fill="currentColor" stroke="none" />
        <path d="M3.500 28Q5 42 20 43Q35 42 36.500 28M20 43V51" />
      </svg>
    </button>
  </form>
);

const NavBar = () => (
  <nav className="flex h-[130px] shrink-0 items-center justify-center gap-[183px] bg-black text-[#999]">
    <button type="button" aria-label="Recientes" className="flex w-[54px] justify-center">
      <span className="size-10 rounded-[6px] bg-current" />
    </button>
    <button type="button" aria-label="Inicio">
      <svg className="size-[54px]" viewBox="0 0 54 54" fill="none" stroke="currentColor" strokeWidth="4">
        <circle cx="27" cy="27" r="25" />
        <circle cx="27" cy="27" r="15" fill="currentColor" stroke="none" />
      </svg>
    </button>
    <button type="button" aria-label="Volver" className="flex w-[54px] justify-center">
      <svg className="h-12 w-[38px]" viewBox="0 0 38 48" fill="currentColor">
        <path d="M34 1Q38 0 38 4V44Q38 48 34 46L2 26Q0 24 2 22Z" />
      </svg>
    </button>
  </nav>
);

const App = () => (
  <div className="flex h-screen flex-col overflow-hidden bg-[#0b1014] font-['Inter',sans-serif]">
    <StatusBar />
    <Header />
    <div className="relative flex min-h-0 flex-1 flex-col">
      <Doodles />
      <main className="relative flex min-h-0 flex-1 flex-col overflow-hidden pr-[47px]">
        <div className="-mt-[77px] flex flex-col">
          {MESSAGES.map((message) => <Message key={message.id} message={message} />)}
        </div>
      </main>
      <Composer />
    </div>
    <NavBar />
  </div>
);

export default App;
